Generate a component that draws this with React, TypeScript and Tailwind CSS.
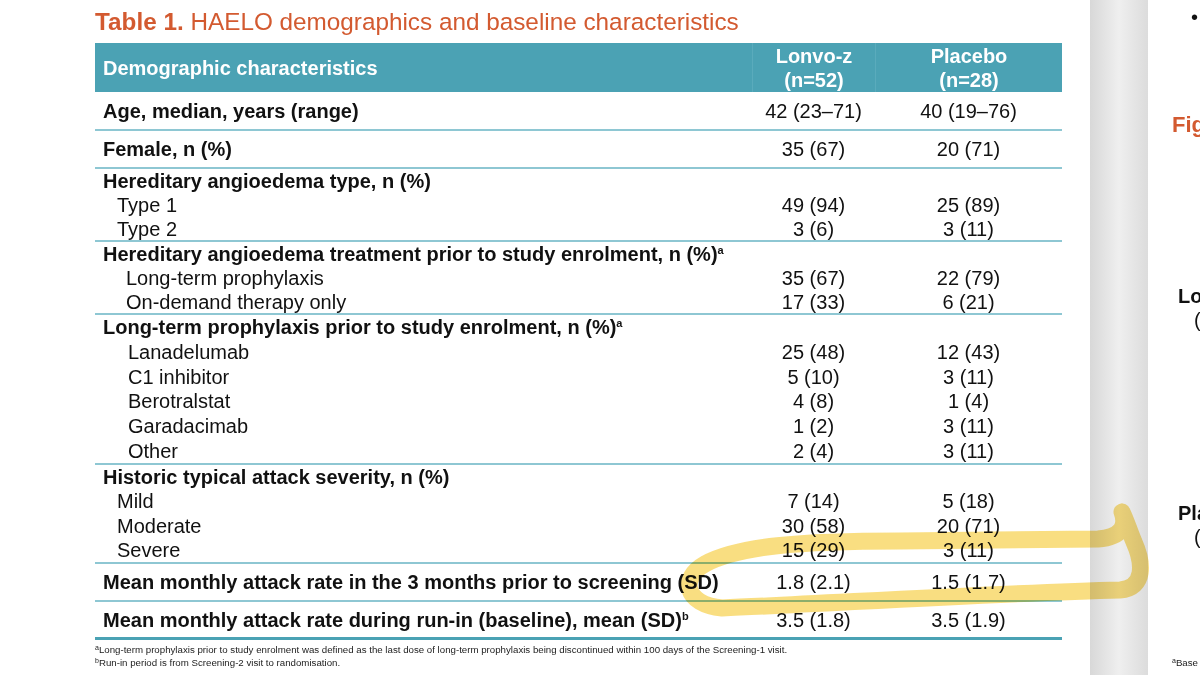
import { ReactNode } from "react";

type Line = {
  label: ReactNode;
  a?: string;
  b?: string;
  bold?: boolean;
  indent?: string;
};

type Block = {
  height: string;
  lines: Line[];
  last?: boolean;
};

// heights include the bottom rule (border-box)
const blocks: Block[] = [
  { height: "h-[39px]", lines: [{ label: "Age, median, years (range)", a: "42 (23–71)", b: "40 (19–76)", bold: true }] },
  { height: "h-[38px]", lines: [{ label: "Female, n (%)", a: "35 (67)", b: "20 (71)", bold: true }] },
  {
    height: "h-[73px]",
    lines: [
      { label: "Hereditary angioedema type, n (%)", bold: true },
      { label: "Type 1", a: "49 (94)", b: "25 (89)", indent: "pl-[22px]" },
      { label: "Type 2", a: "3 (6)", b: "3 (11)", indent: "pl-[22px]" },
    ],
  },
  {
    height: "h-[73px]",
    lines: [
      {
        label: (
          <>
            Hereditary angioedema treatment prior to study enrolment, n (%)
            <Sup>a</Sup>
          </>
        ),
        bold: true,
      },
      { label: "Long-term prophylaxis", a: "35 (67)", b: "22 (79)", indent: "pl-[31px]" },
      { label: "On-demand therapy only", a: "17 (33)", b: "6 (21)", indent: "pl-[31px]" },
    ],
  },
  {
    height: "h-[150px]",
    lines: [
      {
        label: (
          <>
            Long-term prophylaxis prior to study enrolment, n (%)<Sup>a</Sup>
          </>
        ),
        bold: true,
      },
      { label: "Lanadelumab", a: "25 (48)", b: "12 (43)", indent: "pl-[33px]" },
      { label: "C1 inhibitor", a: "5 (10)", b: "3 (11)", indent: "pl-[33px]" },
      { label: "Berotralstat", a: "4 (8)", b: "1 (4)", indent: "pl-[33px]" },
      { label: "Garadacimab", a: "1 (2)", b: "3 (11)", indent: "pl-[33px]" },
      { label: "Other", a: "2 (4)", b: "3 (11)", indent: "pl-[33px]" },
    ],
  },
  {
    height: "h-[99px]",
    lines: [
      { label: "Historic typical attack severity, n (%)", bold: true },
      { label: "Mild", a: "7 (14)", b: "5 (18)", indent: "pl-[22px]" },
      { label: "Moderate", a: "30 (58)", b: "20 (71)", indent: "pl-[22px]" },
      { label: "Severe", a: "15 (29)", b: "3 (11)", indent: "pl-[22px]" },
    ],
  },
  {
    height: "h-[38px]",
    lines: [
      {
        label: "Mean monthly attack rate in the 3 months prior to screening (SD)",
        a: "1.8 (2.1)",
        b: "1.5 (1.7)",
        bold: true,
      },
    ],
  },
  {
    height: "h-[38px]",
    last: true,
    lines: [
      {
        label: (
          <>
            Mean monthly attack rate during run-in (baseline), mean (SD)<Sup>b</Sup>
          </>
        ),
        a: "3.5 (1.8)",
        b: "3.5 (1.9)",
        bold: true,
      },
    ],
  },
];

function Sup({ children }: { children: ReactNode }) {
  return <span className="relative -top-[7px] text-[11px] leading-none">{children}</span>;
}

function Fn({ children }: { children: ReactNode }) {
  return <span className="relative -top-[3px] text-[7px] leading-none">{children}</span>;
}

const grid = "grid grid-cols-[1fr_123px_187px]";

function TableBlock({ block }: { block: Block }) {
  return (
    <div
      className={`${block.height} flex flex-col ${
        block.last ? "border-b-[3px] border-[#4aa2b4]" : "border-b-2 border-[#8ec7d3]"
      }`}
    >
      {block.lines.map((line, i) => (
        <div key={i} className={`${grid} flex-1 items-center whitespace-nowrap`}>
          <div className={`${line.indent ?? "pl-[8px]"} ${line.bold ? "font-bold" : ""}`}>
            {line.label}
          </div>
          <div className="text-center">{line.a}</div>
          <div className="text-center">{line.b}</div>
        </div>
      ))}
    </div>
  );
}

function Highlight() {
  return (
    <svg
      className="pointer-events-none absolute left-0 top-0 mix-blend-multiply"
      width="1200"
      height="675"
      viewBox="0 0 1200 675"
    >
      <path
        d="M1122 512 C1127 526 1122 537 1098 539 L900 541 C800 541 738 546 705 564 C680 578 684 604 722 608 C820 604 1000 593 1120 590 C1146 588 1143 562 1134 542 C1129 530 1126 520 1122 512"
        fill="none"
        stroke="#f7d04c"
        strokeOpacity="0.7"
        strokeWidth="17"
        strokeLinecap="round"
        strokeLinejoin="round"
      />
    </svg>
  );
}

export default function App() {
  return (
    <div className="relative flex h-[675px] w-[1200px] overflow-hidden bg-white font-['Liberation_Sans',Arial,sans-serif] text-[#111]">
      {/* left page */}
      <div className="w-[1090px] shrink-0 pl-[95px] pr-[28px] pt-[8px]">
        <h1 className="text-[24.3px] leading-[28px] text-[#d35a30]">
          <span className="font-bold">Table 1.</span> HAELO demographics and baseline characteristics
        </h1>
        <div className="mt-[7px] text-[20px] leading-[24px]">
          <div className={`${grid} h-[49px] items-center bg-[#4ba2b4] font-bold text-white`}>
            <div className="pl-[8px]">Demographic characteristics</div>
            <div className="flex h-full flex-col items-center justify-center border-l border-[#5aabbc] pt-[1px]">
              <span>Lonvo-z</span>
              <span>(n=52)</span>
            </div>
            <div className="flex h-full flex-col items-center justify-center border-l border-[#5aabbc] pt-[1px]">
              <span>Placebo</span>
              <span>(n=28)</span>
            </div>
          </div>
          {blocks.map((b, i) => (
            <TableBlock key={i} block={b} />
          ))}
        </div>
        <div className="mt-[3px] text-[9.7px] leading-[13px] text-[#222]">
          <p>
            <Fn>a</Fn>Long-term prophylaxis prior to study enrolment was defined as the last dose of long-term
            prophylaxis being discontinued within 100 days of the Screening-1 visit.
          </p>
          <p>
            <Fn>b</Fn>Run-in period is from Screening-2 visit to randomisation.
          </p>
        </div>
      </div>

      {/* gap between pages */}
      <div className="w-[58px] shrink-0 bg-linear-to-r from-[#d8d8d8] via-[#efefef] to-[#dcdcdc]" />

      {/* right page, cut by the window edge */}
      <div className="flex min-w-0 flex-1 flex-col whitespace-nowrap pl-[24px] pt-[5px] text-[20px] leading-[24px]">
        <div className="pl-[19px]">•</div>
        <div className="mt-[82px] text-[22px] font-bold leading-[28px] text-[#d35a30]">Fig</div>
        <div className="mt-[145px] pl-[6px] font-bold">Lo</div>
        <div className="pl-[22px]">(</div>
        <div className="mt-[169px] pl-[6px] font-bold">Pla</div>
        <div className="pl-[22px]">(</div>
        <div className="mt-auto mb-[6px] text-[9.7px] leading-[13px] text-[#222]">
          <Fn>a</Fn>Base
        </div>
      </div>

      <Highlight />
    </div>
  );
}
